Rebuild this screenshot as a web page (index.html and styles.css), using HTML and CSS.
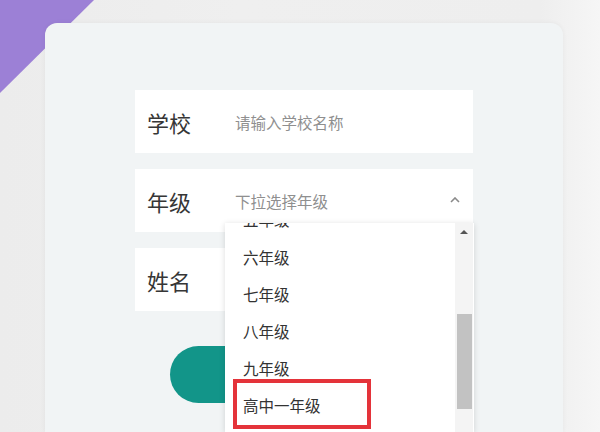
FILE: index.html
```html
<!DOCTYPE html>
<html lang="zh-CN">
<head>
<meta charset="utf-8">
<link rel="stylesheet" href="styles.css">
</head>
<body>
<div class="page">
  <div class="corner"></div>
  <div class="card">
    <div class="form">
      <div class="row">
        <span class="label">学校</span>
        <span class="placeholder">请输入学校名称</span>
      </div>
      <div class="row row-select">
        <span class="label">年级</span>
        <span class="placeholder">下拉选择年级</span>
        <svg class="chevron" width="10" height="6" viewBox="0 0 10 6"><path d="M1 5 L5 1 L9 5" fill="none" stroke="#8a8a8a" stroke-width="1.6"/></svg>
        <div class="dropdown">
          <ul class="options">
            <li>五年级</li>
            <li>六年级</li>
            <li>七年级</li>
            <li>八年级</li>
            <li>九年级</li>
            <li class="marked">高中一年级<span class="mark"></span></li>
          </ul>
          <div class="scrollbar">
            <span class="arrow"></span>
            <span class="thumb"></span>
          </div>
        </div>
      </div>
      <div class="row">
        <span class="label">姓名</span>
      </div>
      <div class="actions">
        <div class="button"></div>
      </div>
    </div>
  </div>
</div>
</body>
</html>
```

FILE: styles.css
```css
html, body {
  margin: 0;
  padding: 0;
}
body {
  width: 600px;
  height: 432px;
  overflow: hidden;
  font-family: "Noto Sans CJK SC", "Noto Sans", sans-serif;
  background: linear-gradient(90deg, #ececec 0%, #efefef 40%, #eeeeee 90%, #f6f6f6 100%);
}
.page {
  position: relative;
  height: 432px;
  padding: 23px 0 0 45px;
  box-sizing: border-box;
  overflow: hidden;
}
.corner {
  position: absolute;
  left: 0;
  top: 0;
  width: 94px;
  height: 93px;
  background: #9c80d6;
  clip-path: polygon(0 0, 100% 0, 0 100%);
}
.card {
  position: relative;
  width: 518px;
  height: 409px;
  background: #f1f4f5;
  border-radius: 12px 12px 0 0;
  box-shadow: 0 0 5px rgba(0, 0, 0, 0.05);
  padding: 67px 0 0 90px;
  box-sizing: border-box;
}
.form {
  width: 338px;
  display: flex;
  flex-direction: column;
  gap: 16px;
}
.row {
  position: relative;
  height: 63px;
  background: #ffffff;
  display: flex;
  align-items: center;
  padding-left: 12px;
}
.label {
  width: 88px;
  font-size: 22px;
  color: #363636;
}
.placeholder {
  font-size: 15.5px;
  color: #8f8f8f;
}
.chevron {
  position: absolute;
  right: 13px;
  top: 28px;
}
.dropdown {
  position: absolute;
  left: 90px;
  top: 54px;
  width: 249px;
  height: 209px;
  background: #ffffff;
  box-shadow: 0 1px 6px rgba(0, 0, 0, 0.14);
  overflow: hidden;
  z-index: 2;
}
.options {
  list-style: none;
  margin: -22px 0 0 0;
  padding: 0;
}
.options li {
  position: relative;
  height: 37px;
  line-height: 37px;
  padding-left: 18px;
  font-size: 15.5px;
  color: #333333;
}
.options li:first-child {
  height: 38px;
}
.mark {
  position: absolute;
  left: 8px;
  top: -8px;
  width: 138px;
  height: 50px;
  border: 4px solid #e4333a;
  box-sizing: border-box;
}
.scrollbar {
  position: absolute;
  right: 1px;
  top: 0;
  width: 18px;
  height: 100%;
  background: #f4f4f4;
}
.arrow {
  position: absolute;
  left: 5px;
  top: 7px;
  width: 0;
  height: 0;
  border-left: 4px solid transparent;
  border-right: 4px solid transparent;
  border-bottom: 4px solid #555555;
}
.thumb {
  position: absolute;
  left: 2px;
  top: 91px;
  width: 15px;
  height: 95px;
  background: #c2c2c2;
}
.actions {
  display: flex;
  justify-content: center;
  padding-top: 19px;
}
.button {
  width: 268px;
  height: 57px;
  border-radius: 29px;
  background: #129589;
}
```
